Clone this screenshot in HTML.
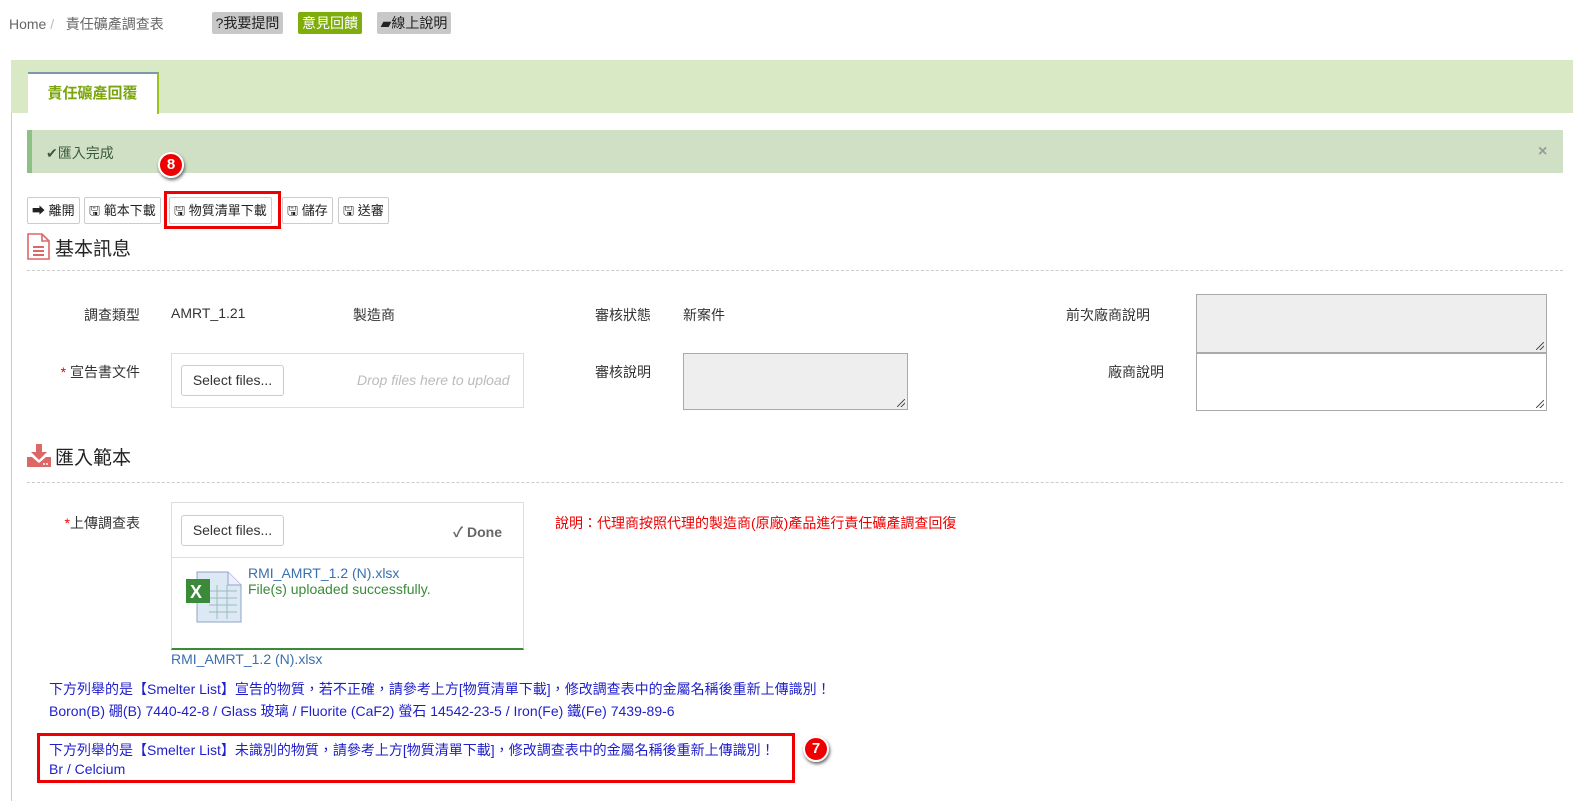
<!DOCTYPE html>
<html><head><meta charset="utf-8"><style>
*{box-sizing:border-box;margin:0;padding:0}
body{width:1581px;height:801px;background:#fff;font-family:"Liberation Sans","Noto Sans CJK TC",sans-serif;font-size:14px;color:#333;position:relative;overflow:hidden}
.a{position:absolute;white-space:nowrap}
.btn{position:absolute;top:197px;height:27px;border:1px solid #ccc;border-radius:2px;background:#fff;font-size:13px;line-height:25px;padding:0 4px;color:#222}
.lbl{position:absolute;font-size:14px;color:#333;text-align:right}
.ta{position:absolute;border:1px solid #aaa;background:#eee}
.ta::after{content:"";position:absolute;right:2px;bottom:2px;width:8px;height:8px;background:linear-gradient(135deg,transparent 45%,#555 45%,#555 55%,transparent 55%,transparent 70%,#555 70%,#555 80%,transparent 80%)}
.dash{position:absolute;left:27px;width:1536px;border-top:1px dashed #ccc}
.blue{color:#1f1fcc;font-size:14px}
.badge{position:absolute;width:26px;height:26px;border-radius:50%;background:#e00;border:2px solid #fff;box-shadow:1px 2px 3px #666;color:#fff;font-weight:bold;font-size:15px;text-align:center;line-height:22px}
</style></head><body>
<div class="a" style="left:9px;top:14px;color:#666">Home <span style="color:#bbb">/</span>&nbsp;&nbsp; 責任礦產調查表</div>
<div class="a" style="left:212px;top:12px;height:22px;width:71px;background:#c8c8c8;border-radius:2px;font-size:14px;line-height:22px;text-align:center;color:#222">?我要提問</div>
<div class="a" style="left:298px;top:12px;height:22px;width:64px;background:#7fad0b;border-radius:2px;font-size:14px;line-height:22px;text-align:center;color:#fff">意見回饋</div>
<div class="a" style="left:377px;top:12px;height:22px;width:74px;background:#c8c8c8;border-radius:2px;font-size:14px;line-height:22px;text-align:center;color:#222">▰線上說明</div>
<div class="a" style="left:11px;top:60px;width:1562px;height:53px;background:#d9e9c6"></div>
<div class="a" style="left:11px;top:113px;width:1px;height:688px;background:#ccc"></div>
<div class="a" style="left:28px;top:72px;width:131px;height:42px;background:#fff;border-top:2px solid #7a9aa8;border-right:2px solid #9bc21a;color:#7aa50d;font-weight:bold;font-size:15px;text-align:center;line-height:40px">責任礦產回覆</div>
<div class="a" style="left:27px;top:130px;width:1536px;height:43px;background:#d0e0c4;border-left:5px solid #8cc084"></div>
<div class="a" style="left:46px;top:143px;color:#3c5a3c;font-size:14px">✔匯入完成</div>
<div class="a" style="left:1538px;top:143px;color:#999;font-weight:bold;font-size:16px">×</div>
<div class="btn" style="left:27px">➡ 離開</div>
<div class="btn" style="left:84px">🖫 範本下載</div>
<div class="btn" style="left:169px">🖫 物質清單下載</div>
<div class="btn" style="left:282px">🖫 儲存</div>
<div class="btn" style="left:338px">🖫 送審</div>
<div class="a" style="left:164px;top:191px;width:117px;height:38px;border:3px solid #e00"></div>
<div class="badge" style="left:158px;top:152px">8</div>
<svg class="a" style="left:27px;top:233px" width="23" height="27" viewBox="0 0 23 27"><path d="M1 1h14l7 7v18H1z" fill="#fff" stroke="#d66" stroke-width="1.6"/><path d="M15 1v7h7" fill="none" stroke="#d66" stroke-width="1.6"/><path d="M6 14h11M6 18h11M6 22h11" stroke="#d66" stroke-width="2"/></svg>
<div class="a" style="left:55px;top:234px;font-size:19px;color:#222">基本訊息</div>
<div class="dash" style="top:270px"></div>
<div class="lbl" style="left:60px;top:305px;width:80px">調查類型</div>
<div class="a" style="left:171px;top:305px">AMRT_1.21</div>
<div class="a" style="left:353px;top:305px">製造商</div>
<div class="a" style="left:595px;top:305px">審核狀態</div>
<div class="a" style="left:683px;top:305px">新案件</div>
<div class="a" style="left:1066px;top:305px">前次廠商說明</div>
<div class="ta" style="left:1196px;top:294px;width:351px;height:59px"></div>
<div class="lbl" style="left:40px;top:362px;width:100px"><span style="color:#e00">*</span> 宣告書文件</div>
<div class="a" style="left:171px;top:353px;width:353px;height:55px;border:1px solid #ddd"></div>
<div class="a" style="left:181px;top:365px;width:103px;height:31px;border:1px solid #ccc;border-radius:3px;line-height:29px;text-align:center">Select files...</div>
<div class="a" style="left:357px;top:372px;color:#bbb;font-style:italic">Drop files here to upload</div>
<div class="a" style="left:595px;top:362px">審核說明</div>
<div class="ta" style="left:683px;top:353px;width:225px;height:57px"></div>
<div class="a" style="left:1108px;top:362px">廠商說明</div>
<div class="ta" style="left:1196px;top:353px;width:351px;height:58px;background:#fff"></div>
<svg class="a" style="left:27px;top:444px" width="24" height="23" viewBox="0 0 24 23"><path d="M9 0h6v8h5l-8 8-8-8h5z" fill="#d66"/><path d="M0 13h5l7 6 7-6h5v10H0z" fill="#d66"/><circle cx="17" cy="20" r="1" fill="#fff"/><circle cx="20" cy="20" r="1" fill="#fff"/></svg>
<div class="a" style="left:55px;top:443px;font-size:19px;color:#222">匯入範本</div>
<div class="dash" style="top:482px"></div>
<div class="lbl" style="left:40px;top:513px;width:100px"><span style="color:#e00">*</span>上傳調查表</div>
<div class="a" style="left:171px;top:502px;width:353px;height:148px;border:1px solid #ddd;border-bottom:2px solid #3a8a3a"></div>
<div class="a" style="left:171px;top:557px;width:353px;border-top:1px solid #ddd"></div>
<div class="a" style="left:181px;top:515px;width:103px;height:31px;border:1px solid #ccc;border-radius:3px;line-height:29px;text-align:center">Select files...</div>
<div class="a" style="left:453px;top:522px;color:#666;font-weight:bold">✓ Done</div>
<svg class="a" style="left:185px;top:571px" width="58" height="52" viewBox="0 0 58 52"><path d="M12 1h31l13 13v37H12z" fill="#dde8f5" stroke="#8ea4c4"/><path d="M43 1v13h13" fill="#eef" stroke="#8ea4c4"/><path d="M24 20h28M24 27h28M24 34h28M24 41h28M32 14v34M42 14v34" stroke="#9bb" stroke-width="1"/><rect x="1" y="8" width="24" height="24" fill="#3a8a3a"/><text x="5" y="27" font-size="18" font-weight="bold" fill="#fff" font-family="Liberation Sans">X</text></svg>
<div class="a" style="left:248px;top:565px;color:#3a6fb0">RMI_AMRT_1.2 (N).xlsx</div>
<div class="a" style="left:248px;top:581px;color:#3a8a3a">File(s) uploaded successfully.</div>
<div class="a" style="left:171px;top:651px;color:#3a6fb0">RMI_AMRT_1.2 (N).xlsx</div>
<div class="a" style="left:555px;top:513px;color:#e00">說明：代理商按照代理的製造商(原廠)產品進行責任礦產調查回復</div>
<div class="a blue" style="left:49px;top:679px">下方列舉的是【Smelter List】宣告的物質，若不正確，請參考上方[物質清單下載]，修改調查表中的金屬名稱後重新上傳識別！</div>
<div class="a blue" style="left:49px;top:701px">Boron(B) 硼(B) 7440-42-8 / Glass 玻璃 / Fluorite (CaF2) 螢石 14542-23-5 / Iron(Fe) 鐵(Fe) 7439-89-6</div>
<div class="a" style="left:37px;top:733px;width:758px;height:50px;border:3px solid #e00"></div>
<div class="a blue" style="left:49px;top:740px">下方列舉的是【Smelter List】未識別的物質，請參考上方[物質清單下載]，修改調查表中的金屬名稱後重新上傳識別！</div>
<div class="a blue" style="left:49px;top:761px">Br / Celcium</div>
<div class="badge" style="left:803px;top:736px">7</div>
</body></html>
